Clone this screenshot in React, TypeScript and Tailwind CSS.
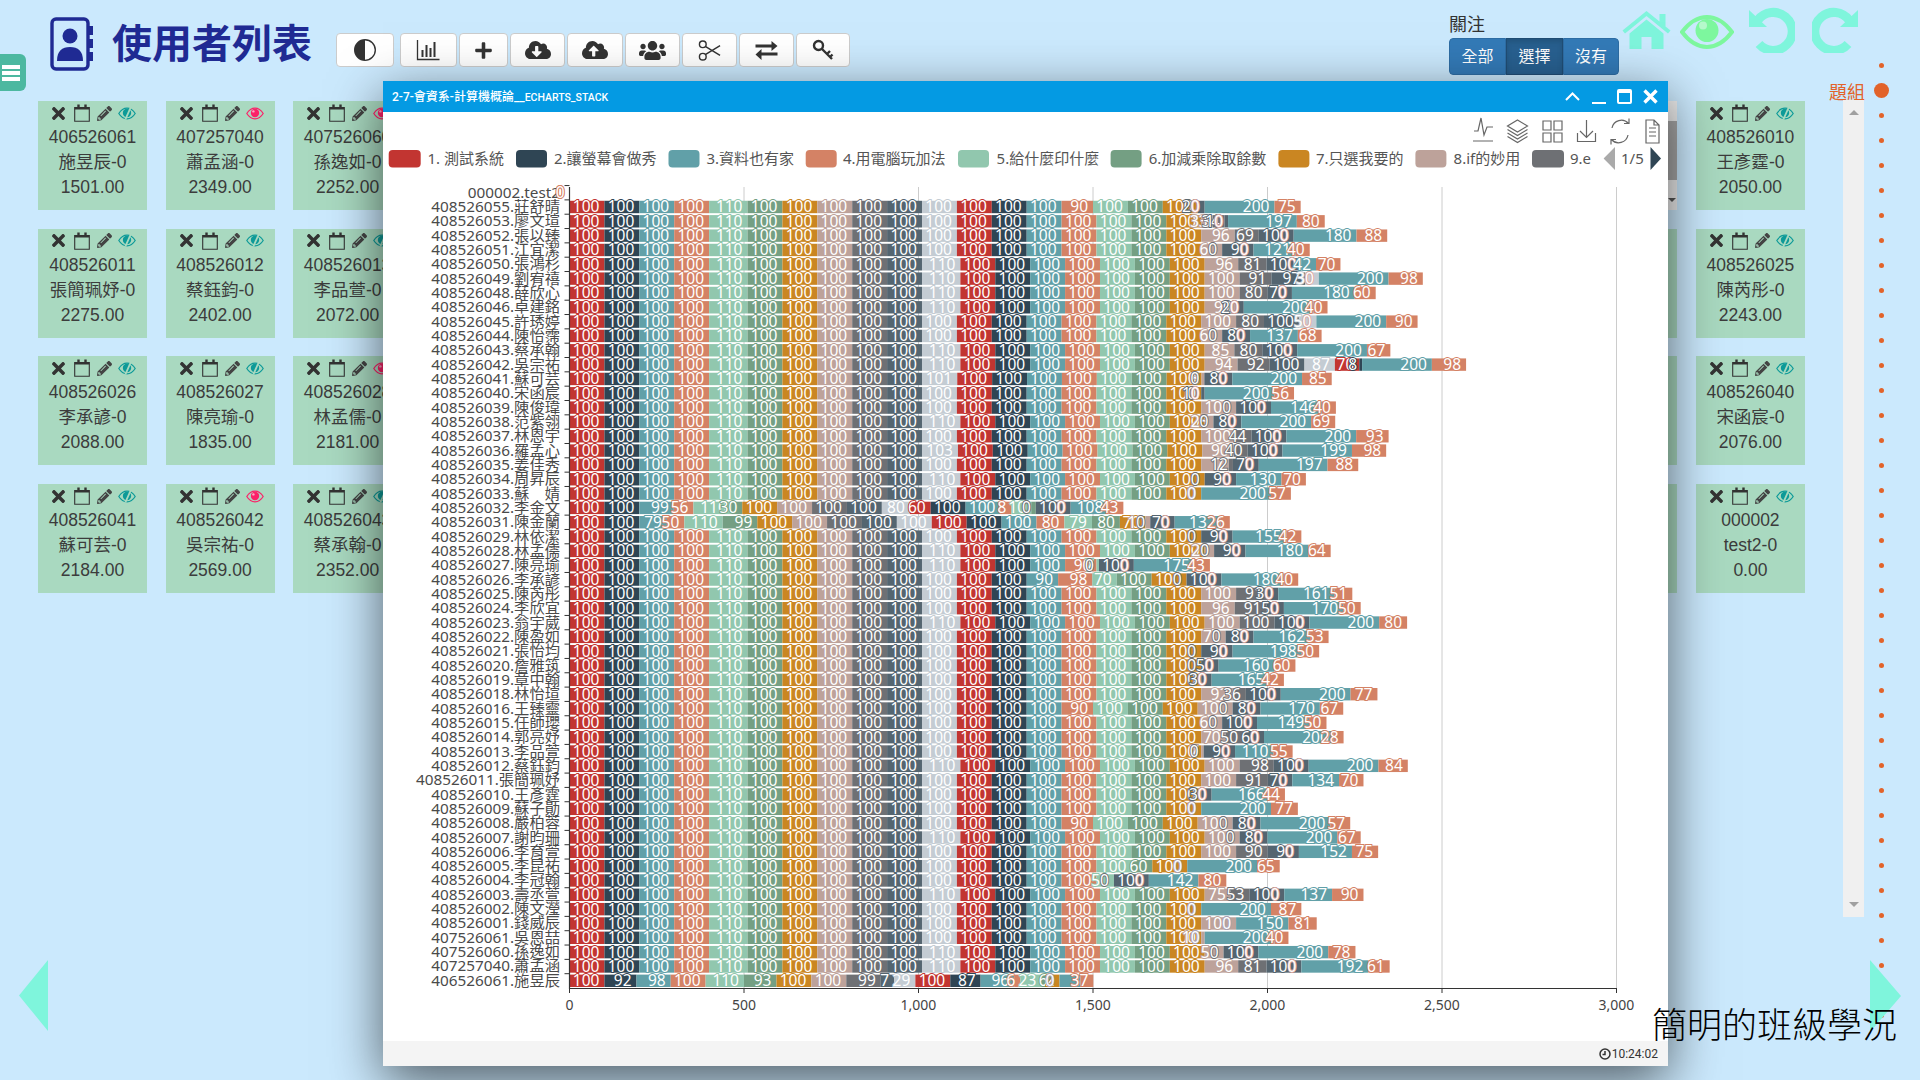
import { BsCircleHalf } from "react-icons/bs";
import { FaCloudDownloadAlt, FaCloudUploadAlt, FaPencilAlt, FaPlus, FaTimes, FaUsers } from "react-icons/fa";

const COLORS = ["#c23531", "#2f4554", "#61a0a8", "#d48265", "#91c7ae", "#749f83", "#ca8622", "#bda29a", "#6e7074", "#546570", "#c4ccd3"];

type Row = {
  id: string;
  name: string;
  values: number[];
  labels?: Record<number, string>;
  score?: number;
};

// tail = rose, grey, slate, teal, orange, then light grey, red, dark when they are not zero
const r = (
  id: string,
  name: string,
  v11: number,
  v15: number,
  tail: number[],
  extra: { over?: Record<number, number>; labels?: Record<number, string>; score?: number } = {},
): Row => {
  const [rose, grey, slate, teal, orange, light = 0, red = 0, dark = 0] = tail;
  const values = [100, 100, 100, 100, 110, 100, 100, 100, 100, 100, v11, 100, 100, 100, v15, 100, 100, 100, rose, grey, slate, light, red, dark, teal, orange];
  Object.entries(extra.over ?? {}).forEach(([k, v]) => {
    values[Number(k)] = v;
  });
  return { id, name, values, labels: extra.labels, score: extra.score };
};

const rows: Row[] = [
  { id: "000002", name: "test2", values: new Array(26).fill(0), score: 0 },
  r("408526055", "莊舒晴", 100, 90, [0, 0, 20, 200, 75]),
  r("408526053", "廖文瑄", 100, 100, [33, 34, 10, 197, 80]),
  r("408526052", "張以臻", 100, 100, [96, 69, 100, 180, 88]),
  r("408526051", "江宜潔", 100, 100, [60, 0, 90, 121, 40]),
  r("408526050", "張鴻杉", 110, 100, [96, 81, 100, 42, 70]),
  r("408526049", "劉宥禧", 110, 100, [100, 91, 97, 200, 98, 39], { labels: { 21: "30" } }),
  r("408526048", "薛欣心", 110, 100, [100, 80, 70, 180, 60]),
  r("408526046", "卓建銘", 110, 100, [92, 0, 20, 200, 40]),
  r("408526045", "許琇婷", 100, 100, [100, 80, 100, 200, 90, 50]),
  r("408526044", "陳怡霈", 100, 100, [60, 0, 80, 137, 68]),
  r("408526043", "蔡承翰", 110, 100, [85, 80, 100, 200, 67]),
  r("408526042", "吳宗祐", 110, 100, [94, 92, 100, 200, 98, 87, 70, 8]),
  r("408526041", "蘇可芸", 101, 100, [8, 0, 80, 200, 85]),
  r("408526040", "宋函宸", 100, 100, [0, 0, 10, 200, 56]),
  r("408526039", "陳俊瑋", 100, 100, [100, 0, 100, 146, 40]),
  r("408526038", "范紫翎", 110, 100, [25, 0, 80, 200, 69]),
  r("408526037", "林恩宇", 100, 100, [100, 44, 100, 200, 93]),
  r("408526036", "羅孟心", 103, 100, [90, 40, 100, 199, 98]),
  r("408526035", "姜佳秀", 100, 100, [79, 12, 74, 197, 88], { labels: { 18: "7", 20: "70" } }),
  r("408526034", "周昇辰", 110, 100, [0, 0, 90, 130, 70]),
  r("408526033", "蘇　婧", 100, 100, [0, 0, 0, 200, 57]),
  {
    id: "408526032",
    name: "李金文",
    values: [100, 100, 99, 56, 110, 30, 100, 100, 100, 100, 80, 60, 100, 100, 31, 57, 13, 0, 0, 0, 100, 0, 0, 0, 108, 43],
    labels: { 14: "8", 15: "10", 16: "0" },
  },
  {
    id: "408526031",
    name: "陳金蘭",
    values: [100, 100, 79, 50, 110, 99, 100, 100, 100, 100, 100, 100, 100, 100, 80, 79, 80, 73, 14, 0, 70, 0, 0, 0, 132, 26],
    labels: { 17: "70", 18: "10" },
  },
  r("408526029", "林依潔", 100, 100, [0, 0, 90, 155, 42]),
  r("408526028", "林孟儒", 110, 100, [27, 0, 90, 180, 64], { labels: { 18: "20" }, score: 2181 }),
  r("408526027", "陳亮瑜", 110, 90, [0, 0, 100, 175, 43], { over: { 15: 7, 16: 0, 17: 0 } }),
  r("408526026", "李承諺", 100, 98, [0, 0, 100, 180, 40], { over: { 13: 90, 15: 70 } }),
  r("408526025", "陳芮彤", 100, 100, [100, 91, 30, 161, 51]),
  r("408526024", "李欣宜", 100, 100, [96, 91, 50, 170, 50]),
  r("408526023", "翁宇葳", 110, 100, [100, 100, 100, 200, 80]),
  r("408526022", "陳盈如", 100, 100, [70, 0, 80, 162, 53]),
  r("408526021", "張怡均", 100, 100, [0, 0, 90, 198, 50]),
  r("408526020", "詹雅筑", 100, 100, [0, 0, 50, 160, 60]),
  r("408526019", "章中翰", 100, 100, [0, 0, 30, 165, 42]),
  r("408526018", "林怡瑄", 100, 100, [92, 36, 100, 200, 77]),
  r("408526016", "王臻靈", 100, 90, [100, 0, 80, 170, 67]),
  r("408526015", "任師瓔", 100, 100, [60, 0, 100, 149, 50]),
  r("408526014", "郭亮妤", 100, 100, [70, 50, 60, 200, 28]),
  r("408526013", "李品萱", 100, 100, [7, 0, 90, 110, 55]),
  r("408526012", "蔡鈺鈞", 110, 100, [100, 98, 100, 200, 84]),
  r("408526011", "張簡珮妤", 100, 100, [100, 91, 70, 134, 70]),
  r("408526010", "王彥霆", 100, 100, [0, 0, 30, 166, 44]),
  r("408526009", "蘇子勛", 100, 100, [0, 0, 0, 200, 77]),
  r("408526008", "嚴柏蓉", 100, 90, [100, 0, 80, 200, 57]),
  r("408526007", "謝昀珊", 110, 100, [100, 0, 80, 200, 67]),
  r("408526006", "李育萱", 100, 100, [100, 90, 90, 152, 75]),
  r("408526005", "李昆祐", 100, 100, [0, 0, 0, 200, 65], { over: { 16: 60 } }),
  r("408526004", "李冠翰", 100, 100, [0, 0, 100, 142, 80], { over: { 15: 50, 16: 0, 17: 0 } }),
  r("408526003", "壽丞萱", 110, 100, [75, 53, 100, 137, 90]),
  r("408526002", "陳文瀅", 100, 100, [0, 0, 0, 200, 87]),
  r("408526001", "錢威辰", 100, 100, [100, 0, 0, 150, 81]),
  r("407526061", "吳恩喆", 100, 100, [10, 0, 0, 200, 40]),
  r("407526060", "孫逸如", 110, 100, [54, 0, 100, 200, 78], { labels: { 18: "50" } }),
  r("407257040", "蕭孟涵", 110, 100, [96, 81, 100, 192, 61], { score: 2349 }),
  {
    id: "406526061",
    name: "施昱辰",
    values: [100, 92, 98, 100, 110, 93, 100, 100, 99, 38, 61, 100, 87, 96, 18, 60, 32, 20, 0, 0, 0, 0, 0, 0, 60, 37],
    labels: { 9: "7", 10: "29", 14: "6", 15: "23", 16: "6", 17: "2", 24: "" },
    score: 1501,
  },
];

const sum = (values: number[]) => values.reduce((a, b) => a + b, 0);

const cards = [...rows.slice(1).reverse(), rows[0]];
const watched = ["407257040", "407526060", "408526028", "408526042"];

const CHART_FONT = "font-['Noto_Sans','Noto_Sans_CJK_TC',sans-serif]";
const X0 = 569.5;
const PX = 0.349;
const rowY = (i: number) => 980.8 - 14.33 * (55 - i);

const legend = [
  { x: 388.7, w: 32, tx: 427.4, c: 0, t: "1. 測試系統" },
  { x: 516, w: 31, tx: 554, c: 1, t: "2.讓螢幕會做秀" },
  { x: 668.5, w: 31, tx: 706.5, c: 2, t: "3.資料也有家" },
  { x: 805.7, w: 31, tx: 843, c: 3, t: "4.用電腦玩加法" },
  { x: 958, w: 31, tx: 996.6, c: 4, t: "5.給什麼印什麼" },
  { x: 1110.6, w: 31, tx: 1148.7, c: 5, t: "6.加減乘除取餘數" },
  { x: 1278.4, w: 31, tx: 1316, c: 6, t: "7.只選我要的" },
  { x: 1415.4, w: 31, tx: 1453.6, c: 7, t: "8.if的妙用" },
  { x: 1532, w: 32, tx: 1570, c: 8, t: "9.e" },
];

function zeroStroke(row: Row, index: number) {
  const v = row.values;
  if (sum(v) === 0) return "#d48265";
  if (index >= 21) return v[20] > 0 ? "#dba79f" : "#a9a3b8";
  if (index === 20) return "#a9a3b8";
  return COLORS[index % 11];
}

function ChartRow({ row, index }: { row: Row; index: number }) {
  const cy = rowY(index);
  let acc = 0;
  const segs = row.values.map((v, i) => {
    const start = acc;
    acc += v;
    return { v, i, start, end: acc };
  });
  const zeroDrawn: Record<number, boolean> = {};
  return (
    <g>
      {segs.map((s) =>
        s.v > 0 ? (
          <rect key={s.i} x={X0 + s.start * PX} y={cy - 6.2} width={s.v * PX} height={12.4} fill={COLORS[s.i % 11]} />
        ) : null,
      )}
      {segs.map((s) => {
        const label = row.labels?.[s.i] ?? String(s.v);
        if (label === "") return null;
        if (s.v === 0) {
          if (zeroDrawn[s.start]) return null;
          const last = [...segs].reverse().find((o) => o.v === 0 && o.start === s.start);
          zeroDrawn[s.start] = true;
          return (
            <text key={s.i} x={X0 + s.end * PX - 5} y={cy + 5.5} textAnchor="end" fontSize={15.5} fill="#fff" stroke={zeroStroke(row, last ? last.i : s.i)} strokeWidth={1.8} paintOrder="stroke">
              0
            </text>
          );
        }
        return (
          <text key={s.i} x={X0 + s.end * PX - 5} y={cy + 5.5} textAnchor="end" fontSize={15.5} fill="#fff" stroke={COLORS[s.i % 11]} strokeWidth={1.8} paintOrder="stroke">
            {label}
          </text>
        );
      })}
    </g>
  );
}

function StackChart() {
  return (
    <svg viewBox="383 112 1285 929" className={`block w-[1285px] h-[929px] ${CHART_FONT}`}>
      {/* legend */}
      {legend.map((l) => (
        <g key={l.t}>
          <rect x={l.x} y={150} width={l.w} height={17.6} rx={4} fill={COLORS[l.c]} />
          <text x={l.tx} y={163.5} fontSize={15} fill="#555">
            {l.t}
          </text>
        </g>
      ))}
      <polygon points="1615,147 1615,170 1603.6,158.5" fill="#aaa" />
      <text x={1621} y={163.5} fontSize={15} fill="#555">
        1/5
      </text>
      <polygon points="1650.5,147 1650.5,170 1661,158.5" fill="#2f4554" />

      {/* toolbox */}
      <g fill="none" stroke="#666" strokeWidth={1.2}>
        <path d="M1473 141h20M1474 131h4l3-13 3 17 3-8h6" />
        <path d="M1517.5 120l10 6-10 6-10-6zM1507.5 129.5l10 6 10-6M1507.5 133l10 6 10-6M1507.5 136.5l10 6 10-6" />
        <path d="M1543 121h8v9h-8zM1554 121h8v9h-8zM1543 133h8v9h-8zM1554 133h8v9h-8z" />
        <path d="M1586.5 120v17M1580 131l6.5 6.5 6.5-6.5M1577.5 133v8.5h18v-8.5" />
        <path d="M1612 128a9.5 9.5 0 0 1 16.5-4.5M1628 135a9.5 9.5 0 0 1-16.5 4.5M1624 123.5h5v-5M1616 139.5h-5v5" />
        <path d="M1646 120h8l5 5v18h-13zM1654 120v5h5M1649 128h7M1649 132h7M1649 136h7" />
      </g>

      {/* grid */}
      {[500, 1000, 1500, 2000, 2500, 3000].map((t) => (
        <line key={t} x1={X0 + t * PX} x2={X0 + t * PX} y1={187} y2={988} stroke="#ccc" />
      ))}

      {rows.map((row, i) => (
        <ChartRow key={row.id} row={row} index={i} />
      ))}

      {/* axes */}
      <path d={`M${X0} 187V988.5H${X0 + 3000 * PX}`} fill="none" stroke="#333" strokeWidth={1.2} />
      {rows.map((_, i) => (
        <line key={i} x1={X0 - 5} x2={X0} y1={rowY(i) - 7.1} y2={rowY(i) - 7.1} stroke="#333" />
      ))}
      {[0, 500, 1000, 1500, 2000, 2500, 3000].map((t) => (
        <g key={t}>
          <line x1={X0 + t * PX} x2={X0 + t * PX} y1={988} y2={993} stroke="#333" />
          <text x={X0 + t * PX} y={1010} fontSize={14} textAnchor="middle" fill="#444">
            {t.toLocaleString("en-US")}
          </text>
        </g>
      ))}
      {rows.map((row, i) => (
        <text key={row.id} x={X0 - 9.5} y={rowY(i) + 5} fontSize={15.3} textAnchor="end" fill="#4a4a4a">
          {row.id}.{row.name}
        </text>
      ))}
      {/* the zero labels of the first row sit on top of its axis label */}
      <text x={X0 - 5} y={rowY(0) + 5.5} fontSize={15.5} textAnchor="end" fill="#fff" stroke="#d48265" strokeWidth={1.8} paintOrder="stroke">
        0
      </text>
    </svg>
  );
}

function Calendar() {
  return (
    <svg viewBox="0 0 16 18" className="w-4 h-[18px]" fill="none" stroke="#333">
      <path d="M.7 3.5h14.6v13.8H.7z" strokeWidth={1.1} />
      <path d="M.7 4.5h14.6" strokeWidth={2} />
      <path d="M4.5.5v4M11.5.5v4" strokeWidth={2.4} />
    </svg>
  );
}

function EyeMark({ open }: { open: boolean }) {
  const color = open ? "#fb2168" : "#0d9a98";
  return (
    <svg viewBox="0 0 18 13" className="w-[18px] h-[13px]" fill="none" stroke={color}>
      <path d="M.8 6.5C3 3 6 1.2 9 1.2s6 1.8 8.2 5.3C15 10 12 11.8 9 11.8S3 10 .8 6.5z" strokeWidth={1.2} />
      <circle cx={9} cy={6} r={4.2} fill={color} stroke="none" />
      {open ? (
        <circle cx={7.4} cy={4.4} r={1.2} fill="#fff" stroke="none" opacity={0.6} />
      ) : (
        <path d="M12.6 .6L7.4 12.4" stroke="#a9d9c0" strokeWidth={1.8} />
      )}
    </svg>
  );
}

function Card({ row, index }: { row: Row; index: number }) {
  const total = row.score ?? sum(row.values);
  return (
    <div className="relative w-[109px] h-[109px] bg-[#a9d9c0] flex flex-col items-center text-[17.5px] leading-[25px] text-[#3c3c3c]">
      <div className="h-6 flex items-center pl-[3px] shrink-0">
        <FaTimes className="w-[13px] h-[19px] text-[#333]" />
        <div className="ml-[9px]">
          <Calendar />
        </div>
        <FaPencilAlt className="ml-[7px] w-[15px] h-[15px] text-[#444]" />
        <div className="ml-[6px]">
          <EyeMark open={watched.includes(row.id)} />
        </div>
      </div>
      <div>{row.id}</div>
      <div>{row.name}-0</div>
      <div>{total.toFixed(2)}</div>
      {index === 12 && (
        <div className="absolute right-0 top-0 bottom-0 w-[10px] bg-[#efefef] flex flex-col items-center">
          <div className="h-5 shrink-0" />
          <div className="w-full h-[59px] bg-[#a8a8a8]" />
          <div className="mt-auto mb-2 w-0 h-0 border-x-4 border-x-transparent border-t-4 border-t-[#555]" />
        </div>
      )}
    </div>
  );
}

function ToolButton({ w, children }: { w: string; children: React.ReactNode }) {
  return (
    <button className={`${w} h-[34px] bg-white border border-[#ccc] rounded-[4px] flex items-center justify-center text-[#333]`}>
      {children}
    </button>
  );
}

function TurnArrow({ flip }: { flip?: boolean }) {
  return (
    <svg viewBox="0 0 46 46" className={`w-[46px] h-[46px] ${flip ? "-scale-x-100" : ""}`}>
      <path d="M9 13A19 19 0 1 1 10 37" fill="none" stroke="#7ff5dc" strokeWidth={9} />
      <polygon points="0,3 0,20 18,20" fill="#7ff5dc" />
    </svg>
  );
}

export default function App() {
  return (
    <div className="relative w-[1920px] h-[1080px] overflow-hidden bg-[#cbe9fd] font-['Liberation_Sans','Noto_Sans_CJK_TC',sans-serif]">
      {/* side menu tab */}
      <div className="absolute left-0 top-[54px] w-[26px] h-[37px] rounded-r-[6px] bg-[#4cb8a0] flex flex-col justify-center gap-[2px] pl-[2px]">
        <div className="w-[18px] h-[4px] bg-white" />
        <div className="w-[18px] h-[4px] bg-white" />
        <div className="w-[18px] h-[4px] bg-white" />
      </div>

      {/* header */}
      <header className="h-[101px] flex items-start pl-[50px]">
        <svg viewBox="0 0 44 54" className="w-[44px] h-[54px] mt-[17px] shrink-0" fill="#1f2a93">
          <rect x="2" y="2" width="36" height="50" rx="4" fill="none" stroke="#1f2a93" strokeWidth="3.4" />
          <path d="M38 9h5v9h-5zM38 22h5v9h-5zM38 35h5v9h-5z" />
          <circle cx="20" cy="19" r="7.5" />
          <path d="M7 44c0-10 5-14 13-14s13 4 13 14z" />
        </svg>
        <h1 className="ml-[18px] mt-[18px] text-[40px] leading-[52px] font-bold text-[#1f2a93] whitespace-nowrap">使用者列表</h1>
        <div className="ml-[24px] mt-[33px] flex">
          <ToolButton w="w-[58px]">
            <BsCircleHalf className="w-[22px] h-[22px] -scale-x-100 rotate-180" />
          </ToolButton>
          <div className="ml-[6px] flex gap-[2px]">
            <ToolButton w="w-[57px]">
              <svg viewBox="0 0 24 22" className="w-[25px] h-[22px]" fill="none" stroke="#333">
                <path d="M1 1v19.5h22" strokeWidth={1.3} />
                <path d="M6 18V11M10 18V6M14 18V9M18 18V3" strokeWidth={2} />
              </svg>
            </ToolButton>
            <ToolButton w="w-[49px]">
              <FaPlus className="w-[19px] h-[19px]" />
            </ToolButton>
            <ToolButton w="w-[55px]">
              <FaCloudDownloadAlt className="w-[26px] h-[26px]" />
            </ToolButton>
            <ToolButton w="w-[56px]">
              <FaCloudUploadAlt className="w-[26px] h-[26px]" />
            </ToolButton>
            <ToolButton w="w-[55px]">
              <FaUsers className="w-[27px] h-[25px]" />
            </ToolButton>
            <ToolButton w="w-[55px]">
              <svg viewBox="0 0 24 24" className="w-[25px] h-[23px]" fill="none" stroke="#333" strokeWidth={1.5}>
                <circle cx="5" cy="5.5" r="3.5" />
                <circle cx="5" cy="18.5" r="3.5" />
                <path d="M8 8l15 9M8 16L23 7" />
              </svg>
            </ToolButton>
            <ToolButton w="w-[55px]">
              <svg viewBox="0 0 24 20" className="w-[25px] h-5" fill="#333">
                <path d="M1 4.5h16V1l6 5-6 5V7.500H1zM23 12.500H7V9l-6 5.500L7 20v-4.500h16z" />
              </svg>
            </ToolButton>
            <ToolButton w="w-[54px]">
              <svg viewBox="0 0 22 22" className="w-[22px] h-[22px]" fill="none" stroke="#333" strokeWidth={2.4}>
                <circle cx="6.500" cy="6.500" r="4.500" />
                <path d="M10 10l10 10M15 15l3-3M18 18l2.500-2.500" />
              </svg>
            </ToolButton>
          </div>
        </div>
        <div className="ml-[599px] mt-[13px] w-[170px]">
          <div className="text-[18px] leading-[25px] text-[#333]">關注</div>
          <div className="flex h-[37px] text-white text-[16px] rounded-[4px] overflow-hidden">
            <div className="w-[57px] bg-[#337ab7] border border-[#2e6da4] flex items-center justify-center rounded-l-[4px]">全部</div>
            <div className="w-[57px] bg-[#286090] border border-[#204d74] flex items-center justify-center shadow-[inset_0_3px_5px_rgba(0,0,0,.125)]">選擇</div>
            <div className="w-[56px] bg-[#337ab7] border border-[#2e6da4] flex items-center justify-center rounded-r-[4px]">沒有</div>
          </div>
        </div>
        <div className="ml-[3px] mt-[7px] flex items-start">
          <svg viewBox="0 0 48 38" className="w-[49px] h-[38px] mt-[4px]" fill="#7ff5dc">
            <path d="M24 0L37 10.500V3h6v12.500L48 19.500 45.500 22.500 24 5 2.500 22.500 0 19.500z" />
            <path d="M24 8.500L41 22.500V38H29V26H19V38H7V22.500z" />
          </svg>
          <svg viewBox="0 0 54 34" className="ml-[9px] mt-[8px] w-[54px] h-[34px]">
            <path d="M2 17C10 6.500 18 2 27 2s17 4.500 25 15C44 27.500 36 32 27 32S10 27.500 2 17z" fill="none" stroke="#7df79e" strokeWidth={4} />
            <circle cx="27" cy="15.500" r="11.500" fill="#7df79e" />
            <circle cx="23" cy="10.500" r="4" fill="#b5f9cb" />
          </svg>
          <div className="ml-[15px]">
            <TurnArrow />
          </div>
          <div className="ml-[17px]">
            <TurnArrow flip />
          </div>
        </div>
      </header>

      {/* user cards */}
      <main className="grid grid-cols-[repeat(14,127.54px)] auto-rows-[127.7px] pl-[38px]">
        {cards.map((row, i) => (
          <Card key={row.id} row={row} index={i} />
        ))}
      </main>

      {/* question group rail */}
      <aside className="absolute top-0 right-0 bottom-0 w-[90px] flex items-start">
        <div className="w-[34px] shrink-0 flex flex-col items-end">
          <div className="mt-[81px] w-[35px] text-[18px] leading-[24px] text-[#e2632a] whitespace-nowrap -mb-[5px]">題組</div>
          <div className="w-[21px] h-[817px] bg-[#f0f0f0] flex flex-col items-center justify-between py-[10px]">
            <div className="w-0 h-0 border-x-[5px] border-x-transparent border-b-[5px] border-b-[#a0a0a0]" />
            <div className="w-0 h-0 border-x-[5px] border-x-transparent border-t-[5px] border-t-[#a0a0a0]" />
          </div>
        </div>
        <div className="ml-[10px] w-[15px] pt-[52.5px] flex flex-col items-center">
          {Array.from({ length: 39 }, (_, i) => (
            <div key={i} className="h-[25px] flex items-center justify-center">
              {i === 1 ? <div className="w-[15px] h-[15px] rounded-full bg-[#e2632a]" /> : <div className="w-[5px] h-[5px] rounded-full bg-[#e2632a]" />}
            </div>
          ))}
        </div>
      </aside>

      {/* paging arrows */}
      <svg viewBox="0 0 29 71" className="absolute left-[19px] top-[960px] w-[29px] h-[71px]">
        <polygon points="29,0 29,71 0,35.500" fill="#7ff5dc" />
      </svg>
      <svg viewBox="0 0 31 72" className="absolute left-[1870px] top-[960px] w-[31px] h-[72px]">
        <polygon points="0,0 31,36 0,72" fill="#7ff5dc" />
      </svg>

      {/* chart window */}
      <section className="absolute left-[383px] top-[81px] w-[1285px] h-[985px] bg-white flex flex-col shadow-[0_16px_50px_rgba(0,0,0,.6)]">
        <div className="h-[31px] shrink-0 bg-[#049ae3] flex items-center justify-between pl-[9px] pr-[10px] text-white font-['Roboto','Noto_Sans_CJK_TC',sans-serif]">
          <div className="whitespace-nowrap text-[12px] font-medium">
            2-7-會資系-計算機概論__<span className="text-[10.5px]">ECHARTS_STACK</span>
          </div>
          <div className="flex items-center">
            <svg viewBox="0 0 15 9" className="w-[15px] h-[9px]" fill="none" stroke="#fff" strokeWidth={2}>
              <path d="M1 8l6.500-6.500L14 8" />
            </svg>
            <div className="ml-3 mt-3 w-[14px] h-[2px] bg-white" />
            <div className="ml-[11px] w-[15px] h-[15px] border-2 border-t-[4px] border-white rounded-[2px]" />
            <svg viewBox="0 0 15 15" className="ml-[11px] w-[15px] h-[15px]" fill="none" stroke="#fff" strokeWidth={3.4}>
              <path d="M1.500 1.500l12 12M13.500 1.500l-12 12" />
            </svg>
          </div>
        </div>
        <div className="flex-1 min-h-0">
          <StackChart />
        </div>
        <div className="h-[25px] shrink-0 bg-[#f4f4f4] flex items-center justify-end pr-[10px] gap-[1px] text-[12px] text-[#333] font-['Roboto',sans-serif]">
          <svg viewBox="0 0 12 12" className="w-3 h-3" fill="none" stroke="#333" strokeWidth={1.5}>
            <circle cx="6" cy="6" r="5" />
            <path d="M6 3v3.500H3.500" />
          </svg>
          10:24:02
        </div>
      </section>

      {/* caption lies over the chart window */}
      <div className="absolute left-[1652px] top-[1005px] text-[35px] leading-[42px] font-light text-black whitespace-nowrap">簡明的班級學況</div>
    </div>
  );
}
